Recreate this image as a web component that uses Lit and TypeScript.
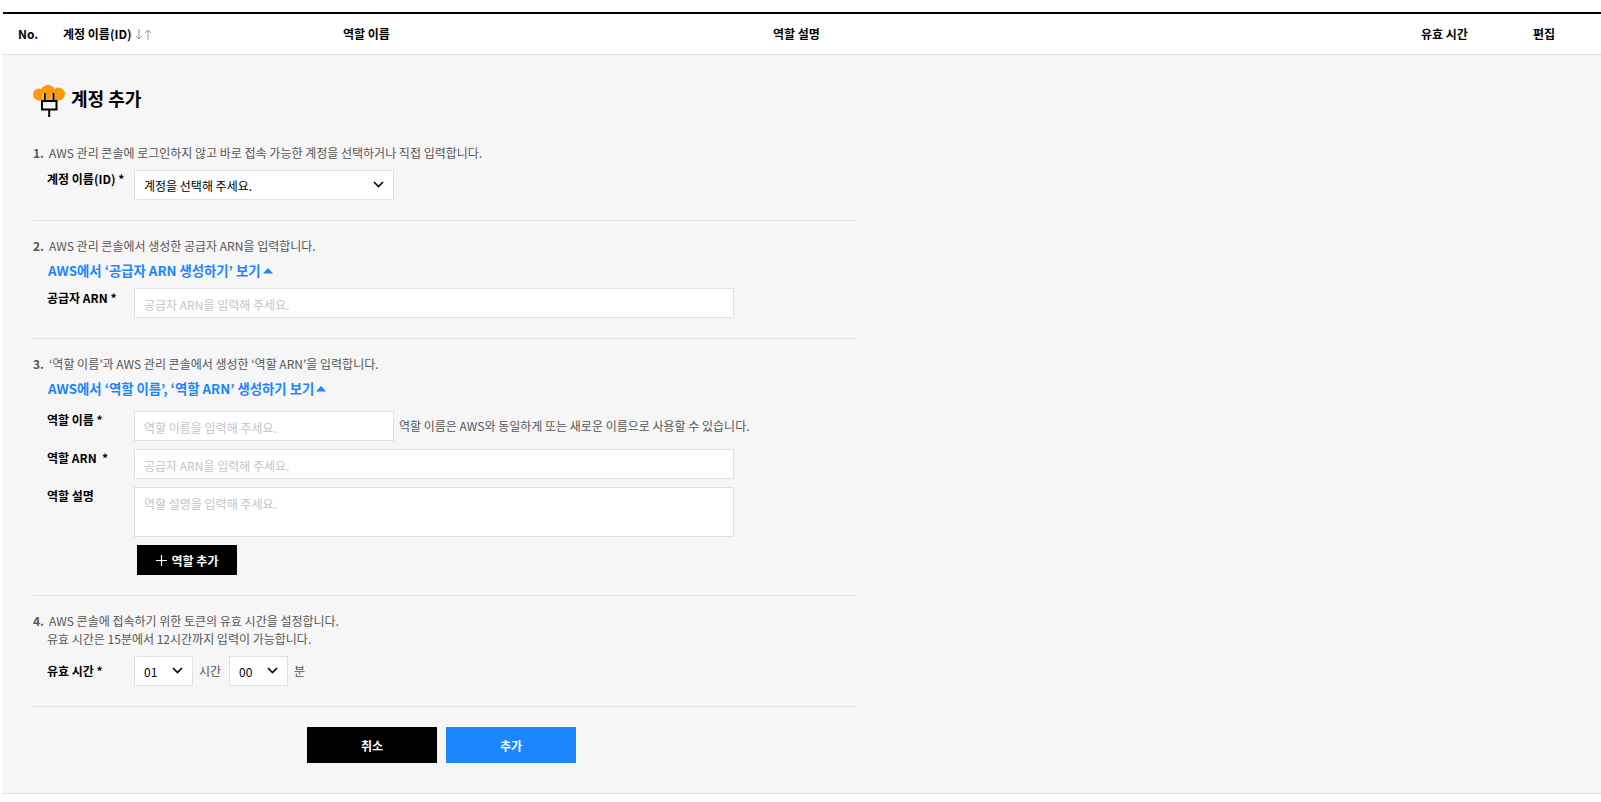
import { LitElement, html, css } from "lit";
import { customElement } from "lit/decorators.js";

const chev = html`<svg class="chev" width="11" height="7" viewBox="0 0 11 7"><path d="M1 1l4.500 4.500L10 1" fill="none" stroke="#000" stroke-width="1.6"/></svg>`;
const caret = html`<svg class="caret" width="10" height="6" viewBox="0 0 10 6"><path d="M5 0l5 5.500H0z" fill="#1a86ff"/></svg>`;

@customElement("app-root")
export class AppRoot extends LitElement {
  static styles = css`
    :host { display:block; font-family:"Noto Sans CJK KR","Noto Sans",sans-serif; font-size:12px; color:#000; height:802px; background:#fff; overflow:hidden; }
    * { box-sizing:border-box; }
    .head { margin:12px 0 0 3px; border-top:2px solid #000; border-bottom:1px solid #ddd; height:43px; display:grid; grid-template-columns:45px 280px 430px 648px 112px 1fr; align-items:center; font-weight:700; padding:0 0 2px 15px; }
    .sort { display:inline-flex; align-items:center; vertical-align:-1px; margin-left:3px; }
    .panel { margin-left:3px; background:#f6f6f6; height:739px; border-bottom:1px solid #ddd; padding:30px 0 0 30px; }
    .title { display:flex; align-items:center; gap:6px; height:32px; font-size:18px; font-weight:700; margin-bottom:27px; }
    .title span { padding-bottom:6px; }
    .sec { width:823px; border-bottom:1px solid #e0e0e0; padding:16px 0 20px; }
    .sec.first { padding-top:0; }
    .step { color:#555; line-height:18px; display:flex; }
    .step b { width:16px; }
    .indent { margin-left:-2px; }
    .link { color:#1a86ff; font-weight:700; font-size:13.35px; line-height:22px; margin:5px 0 0 15px; display:flex; align-items:center; gap:2px; }
    .row { display:flex; margin:8px 0 0 14px; align-items:flex-start; }
    .row.r6 { margin-top:6px; }
    .row.r11 { margin-top:11px; }
    .lab { width:87px; font-weight:700; line-height:18px; flex:none; }
    .lab.low { padding-top:1px; }
    .lab.tall { line-height:30px; }
    input, textarea, select { font:inherit; color:#000; background:#fff; border:1px solid #e0e0e0; border-radius:0; outline:none; padding:0 9px; margin:0; display:block; appearance:none; }
    input { height:30px; padding-top:2px; }
    input::placeholder, textarea::placeholder { color:#c4c4c4; opacity:1; }
    .w600 { width:600px; } .w260 { width:260px; } .w59 { width:59px; }
    textarea { height:50px; padding-top:7px; resize:none; line-height:18px; }
    .sel { position:relative; display:block; flex:none; }
    .sel select { height:30px; width:100%; padding-top:1px; }
    .sel .chev { position:absolute; right:10px; top:11px; }
    .hint { color:#555; margin-left:5px; line-height:30px; }
    .add { margin:8px 0 0 104px; width:100px; height:30px; background:#000; color:#fff; border:none; font:inherit; font-weight:700; display:flex; align-items:center; justify-content:center; gap:5px; padding:0; }
    .unit { color:#555; margin:0 8px 0 6px; line-height:30px; }
    .actions { display:flex; gap:9px; margin:20px 0 0 274px; }
    .actions button { width:130px; height:36px; border:none; color:#fff; font:inherit; font-weight:700; padding:0; }
    .cancel { background:#000; } .ok { background:#1a86ff; }
  `;
  render() {
    return html`
    <div class="head">
      <span>No.</span>
      <span>계정 이름(ID)<span class="sort"><svg width="17" height="11" viewBox="0 0 17 11" fill="none" stroke="#999" stroke-width="1"><path d="M4 0v10M1 7l3 3 3-3M13 11V1M10 4l3-3 3 3"/></svg></span></span>
      <span>역할 이름</span><span>역할 설명</span><span>유효 시간</span><span>편집</span>
    </div>
    <div class="panel">
      <div class="title">
        <svg width="32" height="32" viewBox="0 0 32 32">
          <g fill="#fd9a0b">
            <circle cx="6" cy="9.500" r="6"/><circle cx="15" cy="7.500" r="7.500"/><circle cx="25.500" cy="9" r="6.500"/>
            <rect x="6" y="7" width="20" height="8.500"/>
          </g>
          <path d="M11.300 8v8M20.300 8v8" fill="none" stroke="#f6f6f6" stroke-width="3.200"/>
          <path d="M9 16h14.500v8.500H9z" fill="#f6f6f6" stroke="#000" stroke-width="2"/>
          <path d="M11.800 8v8M20.500 8v8M16.200 24.500V32" fill="none" stroke="#000" stroke-width="2"/>
        </svg>
        <span>계정 추가</span>
      </div>
      <div class="sec first">
        <div class="step"><b>1.</b><span>AWS 관리 콘솔에 로그인하지 않고 바로 접속 가능한 계정을 선택하거나 직접 입력합니다.</span></div>
        <div class="row"><div class="lab">계정 이름(ID) *</div>
          <label class="sel w260"><select><option>계정을 선택해 주세요.</option></select>${chev}</label></div>
      </div>
      <div class="sec">
        <div class="step"><b>2.</b><span>AWS 관리 콘솔에서 생성한 공급자 ARN을 입력합니다.</span></div>
        <div class="link">AWS에서 ‘공급자 ARN 생성하기’ 보기${caret}</div>
        <div class="row r6"><div class="lab low">공급자 ARN *</div><input class="w600" placeholder="공급자 ARN을 입력해 주세요."></div>
      </div>
      <div class="sec">
        <div class="step"><b>3.</b><span>‘역할 이름’과 AWS 관리 콘솔에서 생성한 ‘역할 ARN’을 입력합니다.</span></div>
        <div class="link">AWS에서 ‘역할 이름’, ‘역할 ARN’ 생성하기 보기${caret}</div>
        <div class="row r11"><div class="lab">역할 이름 *</div><input class="w260" placeholder="역할 이름을 입력해 주세요."><span class="hint">역할 이름은 AWS와 동일하게 또는 새로운 이름으로 사용할 수 있습니다.</span></div>
        <div class="row"><div class="lab">역할 ARN &nbsp;*</div><input class="w600" placeholder="공급자 ARN을 입력해 주세요."></div>
        <div class="row"><div class="lab">역할 설명</div><textarea class="w600" placeholder="역할 설명을 입력해 주세요."></textarea></div>
        <button class="add"><svg width="11" height="11" viewBox="0 0 11 11"><path d="M5.500 0v11M0 5.500h11" stroke="#fff" stroke-width="1.200"/></svg>역할 추가</button>
      </div>
      <div class="sec">
        <div class="step"><b>4.</b><span>AWS 콘솔에 접속하기 위한 토큰의 유효 시간을 설정합니다.<br><span class="indent">유효 시간은 15분에서 12시간까지 입력이 가능합니다.</span></span></div>
        <div class="row"><div class="lab tall">유효 시간 *</div>
          <label class="sel w59"><select><option>01</option></select>${chev}</label><span class="unit">시간</span>
          <label class="sel w59"><select><option>00</option></select>${chev}</label><span class="unit">분</span></div>
      </div>
      <div class="actions"><button class="cancel">취소</button><button class="ok">추가</button></div>
    </div>`;
  }
}
